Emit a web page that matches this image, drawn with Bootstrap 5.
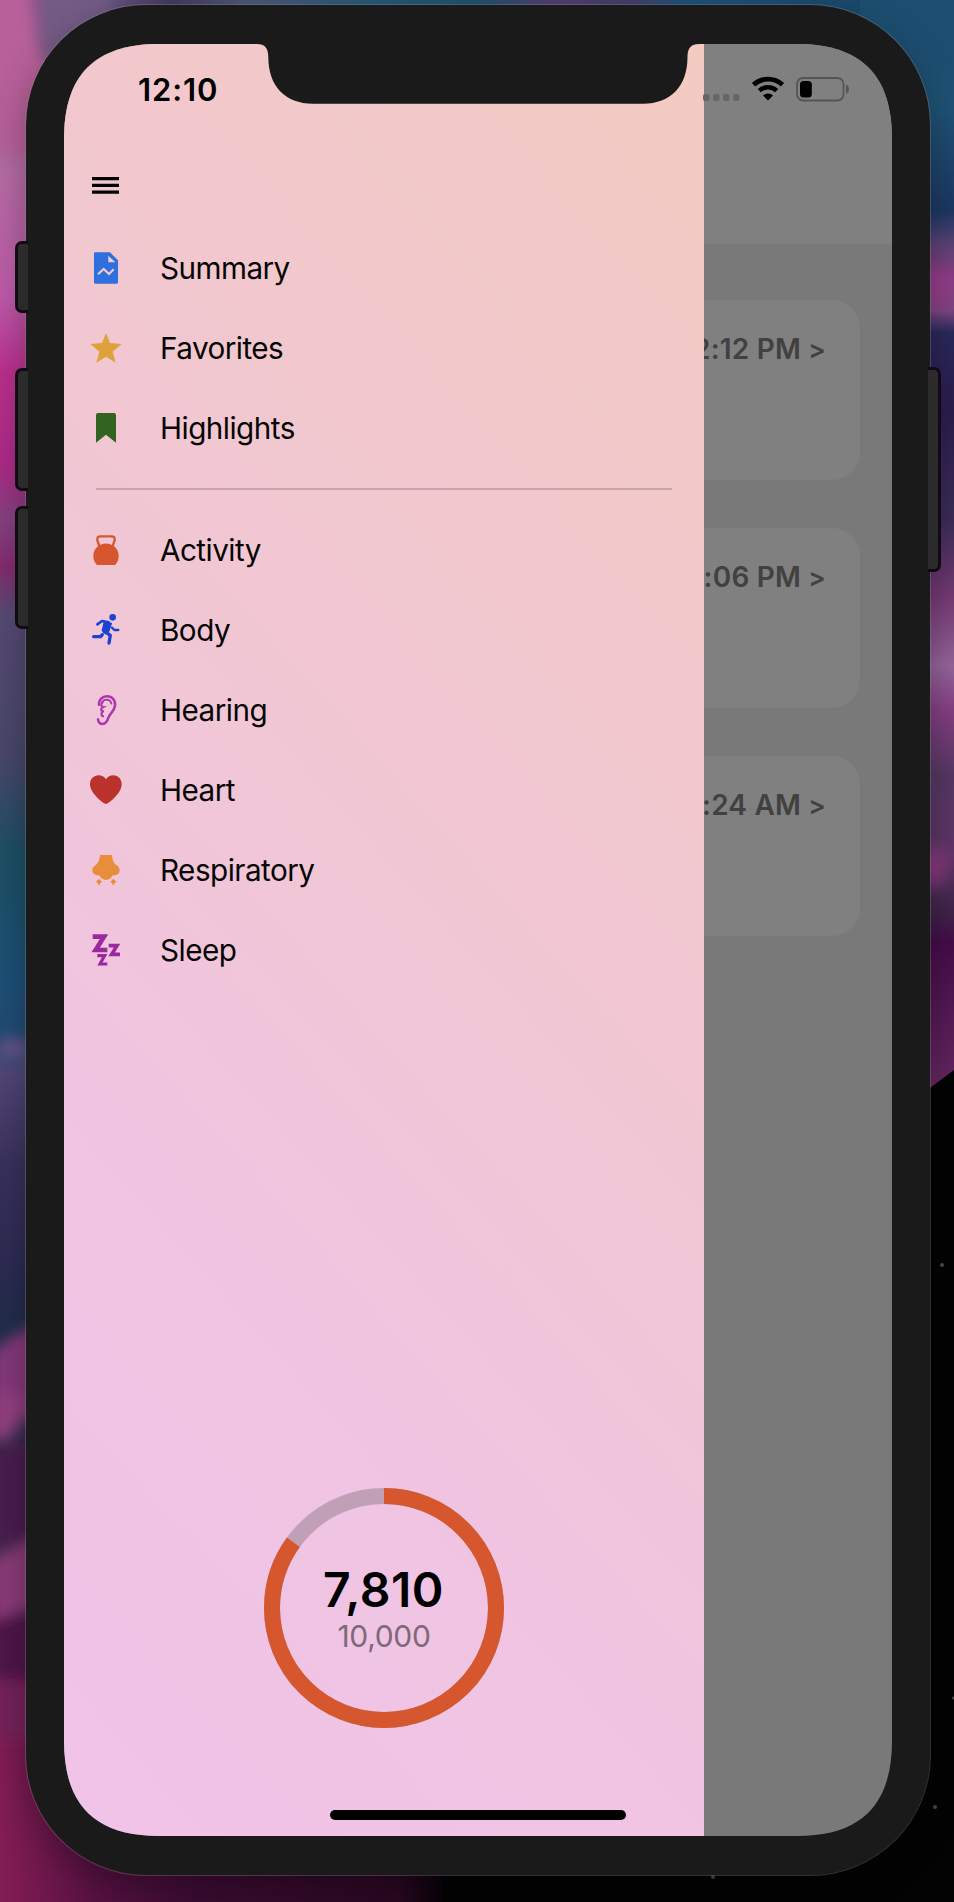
<!DOCTYPE html>
<html lang="en">
<head>
<meta charset="utf-8">
<meta name="viewport" content="width=device-width, initial-scale=1">
<title>Health drawer</title>
<link href="https://cdn.jsdelivr.net/npm/bootstrap@5.3.0/dist/css/bootstrap.min.css" rel="stylesheet">
<style>
  body { width: 954px; height: 1902px; background: #030303; color: #000; font-family: Inter, "Liberation Sans", sans-serif; }
  .wallpaper { z-index: -1; }
  .phone { width: 906px; height: 1872px; margin: 4px 0 0 25px; padding: 39px 38px 39px 38px; border: 1px solid rgba(150,150,150,.32); border-radius: 121px; background: #1a1a1a; box-shadow: 0 14px 36px rgba(0,0,0,.3); background-clip: padding-box; }
  .screen { width: 828px; height: 1792px; background: #797979; clip-path: path("M0 95C0 31 31 0 95 0H733C797 0 828 31 828 95V1697C828 1761 797 1792 733 1792H95C31 1792 0 1761 0 1697Z"); }
  .side-key { width: 13px; background: #2b2b2b; border: 3px solid #110a15; }
  .key-left { left: -11px; border-right: 0; border-radius: 7px 0 0 7px; }
  .key-right { right: -11px; border-left: 0; border-radius: 0 7px 7px 0; }
  .key-mute { top: 236px; height: 72px; }
  .key-up { top: 363px; height: 123px; }
  .key-down { top: 501px; height: 123px; }
  .key-power { top: 362px; height: 205px; }
  .status { height: 60px; z-index: 3; }
  .clock { font-size: 31px; font-weight: 600; line-height: 40px; margin: 26px 0 0 74px; letter-spacing: .9px; }
  .status-icons { margin-right: 41px; }
  .drawer { width: 640px; z-index: 2; background: linear-gradient(228deg, #f3cbc1 0%, #f2c8cd 28%, #f1c6d6 50%, #f0c4e2 72%, #f0c3e8 100%); padding-top: 103px; }
  .drawer-head { height: 82px; padding: 0 0 5px 28px; }
  .menu-row { height: 80px; padding-left: 24px; gap: 36px; font-size: 29.7px; line-height: 40px; letter-spacing: -.55px; color: #060606; }
  .menu-row span { margin-bottom: 2px; }
  .menu-row svg { width: 36px; height: 36px; flex: none; }
  .rule { height: 2px; background: #c8a3ae; margin: 19px 32px 21px; }
  .ring { width: 240px; height: 240px; margin-bottom: 108px; padding-top: 5px; }
  .steps { font-size: 48px; font-weight: 600; line-height: 50px; letter-spacing: .5px; margin-left: -1px; }
  .goal { font-size: 30px; line-height: 42px; color: #7f6878; letter-spacing: -.3px; }
  .backdrop-head { height: 200px; background: #808080; }
  .feed { padding: 56px 32px 0 0; gap: 48px; }
  .reading { width: 188px; height: 180px; border-radius: 28px; background: #808080; color: #414141; font-size: 28px; font-weight: 600; line-height: 34px; letter-spacing: .2px; padding: 32px 34px 0 0; }
  .chevron { font-feature-settings: "calt" 0; font-size: 26px; }
  .home-bar { width: 296px; height: 10px; bottom: 16px; z-index: 3; background: #000; }
</style>
</head>
<body class="position-relative overflow-hidden m-0">

<!-- desktop wallpaper: coloured smoke over black -->
<svg class="wallpaper position-absolute top-0 start-0" width="954" height="1902" viewBox="0 0 954 1902" aria-hidden="true">
  <defs>
    <filter id="softer" x="-50%" y="-50%" width="200%" height="200%"><feGaussianBlur stdDeviation="7"/></filter>
    <linearGradient id="leftSmoke" x2="0" y2="1">
      <stop offset="0" stop-color="#a8508c"/><stop offset=".06" stop-color="#b56ca4"/><stop offset=".13" stop-color="#bd5aa9"/>
      <stop offset=".17" stop-color="#b92f8d"/><stop offset=".22" stop-color="#aa2a86"/><stop offset=".25" stop-color="#84417f"/>
      <stop offset=".275" stop-color="#842b6f"/><stop offset=".3" stop-color="#564a73"/><stop offset=".38" stop-color="#48476b"/>
      <stop offset=".43" stop-color="#1d5064"/><stop offset=".5" stop-color="#1d5077"/><stop offset=".53" stop-color="#234b72"/>
      <stop offset=".55" stop-color="#514778"/><stop offset=".6" stop-color="#39315c"/><stop offset=".66" stop-color="#2b2a52"/>
      <stop offset=".7" stop-color="#1c3048"/><stop offset="1" stop-color="#7a1d50"/>
    </linearGradient>
    <linearGradient id="topSmoke">
      <stop offset="0" stop-color="#8f5285"/><stop offset=".1" stop-color="#6a5783"/><stop offset=".18" stop-color="#443a60"/>
      <stop offset=".26" stop-color="#4c5878"/><stop offset=".4" stop-color="#255878"/><stop offset=".5" stop-color="#20506f"/>
      <stop offset=".58" stop-color="#513f6f"/><stop offset=".66" stop-color="#453e68"/><stop offset=".72" stop-color="#1d5278"/><stop offset="1" stop-color="#194362"/>
    </linearGradient>
    <linearGradient id="rightSmoke" x2="0" y2="1">
      <stop offset="0" stop-color="#1b4a6b"/><stop offset=".1" stop-color="#1f5274"/><stop offset=".19" stop-color="#1c3763"/>
      <stop offset=".22" stop-color="#5b4375"/><stop offset=".25" stop-color="#8b3c85"/><stop offset=".28" stop-color="#7a4782"/>
      <stop offset=".3" stop-color="#29285a"/><stop offset=".37" stop-color="#2b1c4c"/><stop offset=".47" stop-color="#3a2c55"/>
      <stop offset=".54" stop-color="#763a75"/><stop offset=".6" stop-color="#95659b"/><stop offset=".64" stop-color="#843f83"/>
      <stop offset=".7" stop-color="#553762"/><stop offset=".77" stop-color="#5f3568"/>
      <stop offset=".82" stop-color="#3f2549"/><stop offset=".85" stop-color="#440c49"/><stop offset="1" stop-color="#6a2c65"/>
    </linearGradient>
    <linearGradient id="bottomSmoke">
      <stop offset="0" stop-color="#831d55"/><stop offset=".22" stop-color="#571142"/><stop offset=".45" stop-color="#3c0c33"/><stop offset=".9" stop-color="#2a0822"/><stop offset="1" stop-color="#0a0208"/>
    </linearGradient>
  </defs>
  <rect width="954" height="1902" fill="#030303"/>
  <path d="M640 0H954V1070L900 1110H640Z" fill="url(#rightSmoke)"/>
  <rect width="954" height="60" fill="url(#topSmoke)"/>
  <path d="M860 60H954V0H860Z" fill="#1d4e70"/>
  <rect y="60" width="90" height="1842" fill="url(#leftSmoke)"/>
  <path d="M0 1640H442V1902H0Z" fill="url(#bottomSmoke)"/>
  <g filter="url(#softer)">
    <path d="M-20 -20H28L38 50L60 90V150H-20Z" fill="#b7609a"/>
    <path d="M44 -10H120L70 60L42 54Z" fill="#735c85"/>
    <path d="M-10 1355Q20 1325 60 1318V1420H-10Z" fill="#85387c"/>
    <path d="M-10 1395Q20 1385 24 1405Q20 1445 -10 1440Z" fill="#93407f"/>
    <path d="M-10 1455L50 1425V1545L-10 1540Z" fill="#4a1c50"/>
    <path d="M-10 1560L40 1535V1615L-10 1620Z" fill="#8a3b78"/>
    <path d="M-10 1622L40 1605V1680H-10Z" fill="#501848"/>
    <path d="M-10 1685Q15 1675 40 1690V1740H-10Z" fill="#74235a"/>
    <ellipse cx="14" cy="1048" rx="16" ry="10" fill="#67528a"/>
    <ellipse cx="938" cy="288" rx="11" ry="20" fill="#953c88"/>
    <ellipse cx="934" cy="866" rx="13" ry="20" fill="#85397d"/>
  </g>
  <g fill="#484b4b">
    <circle cx="942" cy="1265" r="2"/><circle cx="935" cy="1807" r="2"/><circle cx="713" cy="1877" r="2"/><circle cx="953.500" cy="1698" r="1.500"/>
  </g>
</svg>

<div class="phone position-relative">
  <span class="side-key key-left key-mute position-absolute"></span>
  <span class="side-key key-left key-up position-absolute"></span>
  <span class="side-key key-left key-down position-absolute"></span>
  <span class="side-key key-right key-power position-absolute"></span>

  <div class="screen position-relative overflow-hidden">

    <!-- dimmed page behind the drawer -->
    <main>
      <div class="backdrop-head"></div>
      <div class="feed d-flex flex-column align-items-end">
        <div class="reading text-end text-nowrap">2:12 PM <span class="chevron">&gt;</span></div>
        <div class="reading text-end text-nowrap">:06 PM <span class="chevron">&gt;</span></div>
        <div class="reading text-end text-nowrap">:24 AM <span class="chevron">&gt;</span></div>
      </div>
    </main>

    <aside class="drawer position-absolute top-0 start-0 h-100 d-flex flex-column">
      <div class="drawer-head d-flex align-items-center">
        <svg width="27" height="17" viewBox="0 0 27 17"><path d="M0 1.700H27M0 8.400H27M0 15.100H27" stroke="#000" stroke-width="3.300"/></svg>
      </div>
      <ul class="list-unstyled m-0">
        <li class="menu-row d-flex align-items-center">
          <svg viewBox="0 0 108 108"><path d="M22 4H66L90 28V94Q90 98 86 98H22Q18 98 18 94V8Q18 4 22 4Z" fill="#2f6fde"/><path d="M61 14V34H82Z" fill="#f2cad5"/><path d="M30 70L47 54L63 69L77 55" fill="none" stroke="#f2cad5" stroke-width="6.500"/></svg>
          <span>Summary</span></li>
        <li class="menu-row d-flex align-items-center">
          <svg viewBox="0 0 108 108"><path d="M54 6L66 36L101 39L74 62L83 95L54 77L25 95L34 62L7 39L42 36Z" fill="#dfa23b"/></svg>
          <span>Favorites</span></li>
        <li class="menu-row d-flex align-items-center">
          <svg viewBox="0 0 108 108"><path d="M30 6H78Q84 6 84 12V95L54 71L24 95V12Q24 6 30 6Z" fill="#33641f"/></svg>
          <span>Highlights</span></li>
      </ul>
      <div class="rule"></div>
      <ul class="list-unstyled m-0">
        <li class="menu-row d-flex align-items-center">
          <svg viewBox="0 0 108 108"><path d="M27 96A38 38 0 1 1 81 96Z" fill="#d6562e"/><path d="M35 42L28 22Q26 10 38 10H70Q82 10 80 22L73 42" fill="none" stroke="#d6562e" stroke-width="7"/></svg>
          <span>Activity</span></li>
        <li class="menu-row d-flex align-items-center">
          <svg viewBox="0 0 108 108" fill="none" stroke="#1b43cf" stroke-linecap="round" stroke-linejoin="round"><circle cx="74" cy="13" r="10" fill="#1b43cf" stroke="none"/><path d="M28 34L42 24L62 28" stroke-width="8"/><path d="M49 27L70 31L62 56L48 60L43 52Z" fill="#1b43cf" stroke-width="4"/><path d="M72 44L79 51H91" stroke-width="7"/><path d="M17 71H38L43 65" stroke-width="10"/><path d="M52 57L67 67L63 90" stroke-width="10"/></svg>
          <span>Body</span></li>
        <li class="menu-row d-flex align-items-center">
          <svg viewBox="0 0 108 108" fill="none" stroke="#ad35ad" stroke-linecap="round"><path d="M33 35C32 20 43 10 57 10C73 10 83 22 81 38C79 54 66 62 61 74C57 88 52 93 44 93C36 93 31 87 30 79" stroke-width="7.500"/><path d="M41 31C43 23 50 20 58 20C66 21 69 25 70 32" stroke-width="5.500"/><path d="M44 28C38 34 38 41 46 42C36 47 38 55 47 54C39 58 38 67 45 70" stroke-width="6.500"/></svg>
          <span>Hearing</span></li>
        <li class="menu-row d-flex align-items-center">
          <svg viewBox="0 0 108 108"><path d="M54 93C48 93 6 62 6 34C6 18 18 7 32 7C41 7 49 11 54 19C59 11 67 7 76 7C90 7 101 18 101 34C101 62 60 93 54 93Z" fill="#bb312b"/></svg>
          <span>Heart</span></li>
        <li class="menu-row d-flex align-items-center">
          <svg viewBox="0 0 108 108"><path d="M36 6H72C73 22 77 30 86 37C93 42 96 48 95 55C93 64 84 69 74 67C70 76 62 81 54 81C46 81 38 76 34 67C24 69 15 64 13 55C12 48 15 42 22 37C31 30 35 22 36 6Z" fill="#e88e3b"/><path d="M33 96V82M26 88L33 81L40 88M76 96V82M69 88L76 81L83 88" fill="none" stroke="#e88e3b" stroke-width="5"/></svg>
          <span>Respiratory</span></li>
        <li class="menu-row d-flex align-items-center">
          <svg viewBox="0 0 108 108" fill="none" stroke="#9b289e"><path d="M14 11H48L23 51H58" stroke-width="14"/><path d="M62 38H87L71 64H96" stroke-width="11"/><path d="M28 68H50L36 93H58" stroke-width="9.500"/></svg>
          <span>Sleep</span></li>
      </ul>
      <div class="ring mt-auto mx-auto position-relative d-flex flex-column align-items-center justify-content-center">
        <svg class="position-absolute top-0 start-0" width="240" height="240" viewBox="0 0 240 240" fill="none" stroke-width="16">
          <circle cx="120" cy="120" r="112" stroke="#c19fb6"/>
          <circle cx="120" cy="120" r="112" stroke="#d6562e" pathLength="100" stroke-dasharray="85 15" transform="rotate(-90 120 120)"/>
        </svg>
        <div class="steps">7,810</div>
        <div class="goal">10,000</div>
      </div>
    </aside>

    <div class="status position-absolute top-0 start-0 w-100 d-flex justify-content-between align-items-start">
      <span class="clock">12:10</span>
      <svg class="status-icons" width="150" height="60" viewBox="701 44 150 60">
        <g fill="#666"><rect x="703" y="94" width="6.500" height="7" rx="2"/><rect x="713" y="94" width="6.500" height="7" rx="2"/><rect x="723" y="94" width="6.500" height="7" rx="2"/><rect x="733" y="94" width="6.500" height="7" rx="2"/></g>
        <g fill="none" stroke="#000"><path d="M753.500 84.800A21.500 21.500 0 0 1 782.500 84.800" stroke-width="4.800"/><path d="M759.300 90.600A13 13 0 0 1 776.700 90.600" stroke-width="4.500"/></g>
        <path d="M768 100.500L762.900 95.500A7.300 7.300 0 0 1 773.100 95.500Z" fill="#000"/>
        <rect x="797" y="78" width="46.500" height="22.500" rx="6" fill="none" stroke="#555" stroke-width="1.800"/>
        <rect x="800" y="81" width="11.800" height="16.500" rx="3.500"/>
        <path d="M846 84.500Q849 86 849 89.300Q849 92.500 846 94Z" fill="#555"/>
      </svg>
    </div>
    <svg class="position-absolute top-0 z-3" style="left:190px" width="448" height="60" viewBox="254 44 448 60" aria-hidden="true">
      <path d="M254 43V44H257C265 44 268.300 48 268.300 57C268.300 86 285 103.700 313 103.700H643C671 103.700 687.500 86 687.500 57C687.500 48 691 44 699 44H702V43Z" fill="#1a1a1a"/>
    </svg>
    <span class="home-bar position-absolute start-50 translate-middle-x rounded-pill"></span>
  </div>
</div>
<script src="https://cdn.jsdelivr.net/npm/bootstrap@5.3.0/dist/js/bootstrap.bundle.min.js"></script>
</body>
</html>
